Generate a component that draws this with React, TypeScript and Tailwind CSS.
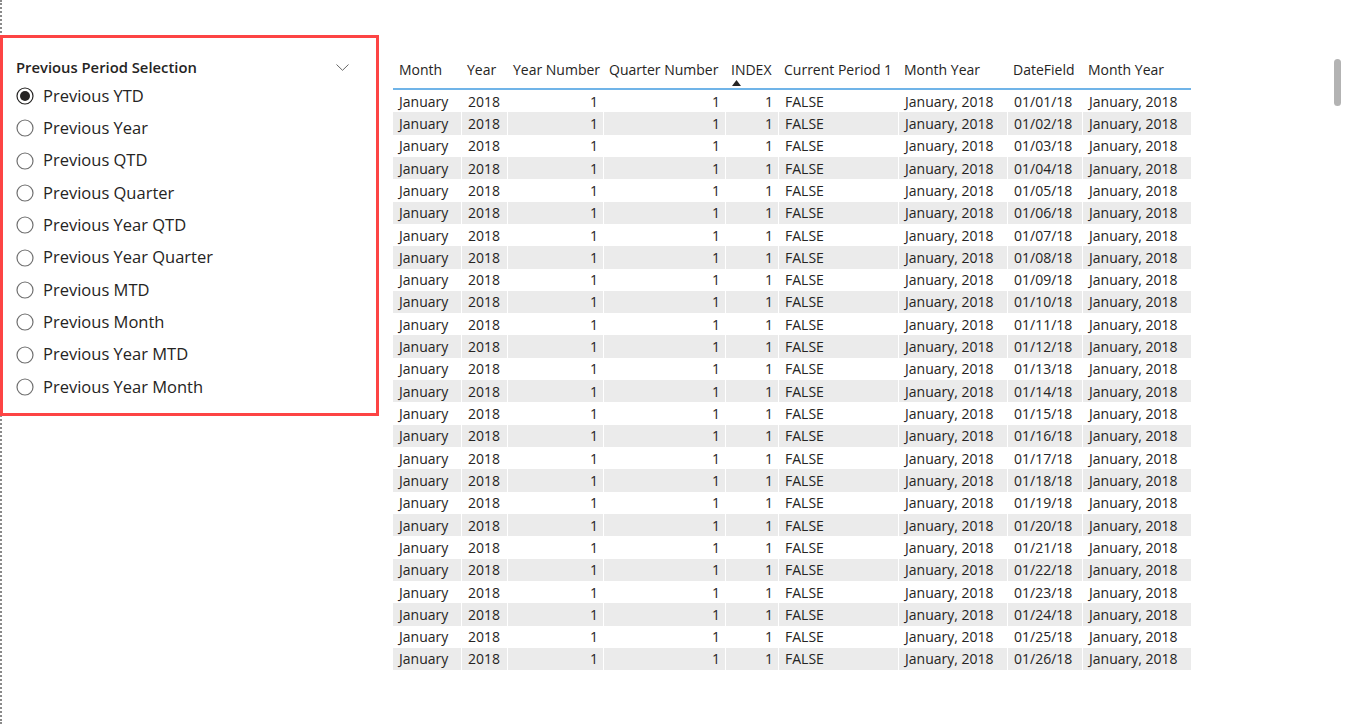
import React from "react";

const options = [
  "Previous YTD",
  "Previous Year",
  "Previous QTD",
  "Previous Quarter",
  "Previous Year QTD",
  "Previous Year Quarter",
  "Previous MTD",
  "Previous Month",
  "Previous Year MTD",
  "Previous Year Month",
];

const cols = [
  { name: "Month", w: "w-[68px]", right: false },
  { name: "Year", w: "w-[46px]", right: false },
  { name: "Year Number", w: "w-[96px]", right: true },
  { name: "Quarter Number", w: "w-[122px]", right: true },
  { name: "INDEX", w: "w-[53px]", right: true },
  { name: "Current Period 1", w: "w-[120px]", right: false },
  { name: "Month Year", w: "w-[109px]", right: false },
  { name: "DateField", w: "w-[75px]", right: false },
  { name: "Month Year", w: "w-[109px]", right: false },
];

function rowValues(i: number) {
  const d = String(i + 1).padStart(2, "0");
  return [
    "January",
    "2018",
    "1",
    "1",
    "1",
    "FALSE",
    "January, 2018",
    `01/${d}/18`,
    "January, 2018",
  ];
}

function Radio({ checked }: { checked: boolean }) {
  return (
    <svg width="18" height="18" viewBox="0 0 18 18" className="shrink-0">
      <circle
        cx="9"
        cy="9"
        r="8"
        fill="white"
        stroke={checked ? "#252423" : "#707070"}
        strokeWidth="1.2"
      />
      {checked && <circle cx="9" cy="9" r="5" fill="#252423" />}
    </svg>
  );
}

export default function App() {
  const rows = Array.from({ length: 26 }, (_, i) => i);
  return (
    <div
      className="relative w-[1372px] h-[724px] bg-white overflow-hidden text-[#252423]"
      style={{ fontFamily: "'Open Sans', 'Noto Sans', sans-serif" }}
    >
      <div className="absolute left-0 top-0 h-full border-l-2 border-dotted border-[#8a8a8a]" />
      <div className="flex items-start">
        <div className="relative mt-[35px] w-[379px] h-[381px] border-[3px] border-[#fd4444] bg-white pl-[13px] pr-[27px] pt-[19px]">
          <div className="flex h-[20px] items-center justify-between">
            <span className="text-[14.8px] font-semibold text-[#252423]">
              Previous Period Selection
            </span>
            <svg width="13" height="7" viewBox="0 0 13 7">
              <path d="M0.5 0.5 L6.5 6.3 L12.5 0.5" fill="none" stroke="#666" strokeWidth="1" />
            </svg>
          </div>
          <div className="mt-[3px] flex flex-col">
            {options.map((o, i) => (
              <div key={o} className="flex h-[32.33px] items-center gap-[9px]">
                <Radio checked={i === 0} />
                <span className="text-[16.5px] text-[#252423]">{o}</span>
              </div>
            ))}
          </div>
        </div>

        <div className="ml-[14px] mt-[58px] flex flex-col text-[14px]">
          <div className="flex h-[32px] border-b-2 border-[#70b4e8]">
            {cols.map((c, i) => (
              <div
                key={i}
                className={`${c.w} relative flex items-start pt-[1px] px-[6px] whitespace-nowrap`}
              >
                {c.name}
                {c.name === "INDEX" && (
                  <svg
                    width="9"
                    height="6"
                    viewBox="0 0 9 6"
                    className="absolute left-[7px] top-[22px]"
                  >
                    <path d="M0 6 L4.5 0 L9 6 Z" fill="#252423" />
                  </svg>
                )}
              </div>
            ))}
          </div>
          {rows.map((r) => {
            const vals = rowValues(r);
            return (
              <div
                key={r}
                className={`flex h-[22.32px] items-center ${r % 2 === 1 ? "bg-[#ebebeb]" : "bg-white"}`}
              >
                {cols.map((c, i) => (
                  <div
                    key={i}
                    className={`${c.w} h-full flex items-center whitespace-nowrap ${
                      c.right ? "justify-end pr-[5px]" : "justify-start pl-[6px]"
                    } ${i > 0 ? "border-l border-white" : ""}`}
                  >
                    {vals[i]}
                  </div>
                ))}
              </div>
            );
          })}
        </div>
      </div>
      <div className="absolute left-[1334px] top-[59px] h-[47px] w-[7px] rounded-full bg-[#b3b3b3]" />
    </div>
  );
}
